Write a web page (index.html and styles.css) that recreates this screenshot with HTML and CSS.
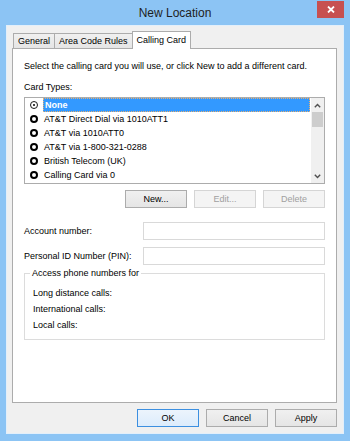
FILE: index.html
```html
<!DOCTYPE html>
<html lang="en">
<head>
    <meta charset="UTF-8">
    <title>New Location</title>
    <link rel="stylesheet" href="styles.css">
</head>
<body>
    <div class="window">
        <div class="titlebar">
            <span class="title">New Location</span>
            <div class="close">
                <svg width="8" height="7" viewBox="0 0 8 7"><path d="M1 0.5 L7 6.5 M7 0.5 L1 6.5" stroke="#fff" stroke-width="1.8"/></svg>
            </div>
        </div>
        <div class="client">
            <div class="tabs">
                <div class="tab">General</div>
                <div class="tab">Area Code Rules</div>
                <div class="tab active">Calling Card</div>
            </div>
            <div class="panel">
                <p class="intro">Select the calling card you will use, or click New to add a different card.</p>
                <p class="caption">Card Types:</p>
                <div class="listbox">
                    <ul class="cards">
                        <li class="selected"><span class="radio checked"></span><span class="name">None</span></li>
                        <li><span class="radio"></span><span class="name">AT&amp;T Direct Dial via 1010ATT1</span></li>
                        <li><span class="radio"></span><span class="name">AT&amp;T via 1010ATT0</span></li>
                        <li><span class="radio"></span><span class="name">AT&amp;T via 1-800-321-0288</span></li>
                        <li><span class="radio"></span><span class="name">British Telecom (UK)</span></li>
                        <li><span class="radio"></span><span class="name">Calling Card via 0</span></li>
                    </ul>
                    <div class="scrollbar">
                        <div class="arrow">
                            <svg width="7" height="5" viewBox="0 0 7 5"><path d="M0.8 4.2 L3.5 1.5 L6.2 4.2" fill="none" stroke="#505050" stroke-width="1.4"/></svg>
                        </div>
                        <div class="thumb"></div>
                        <div class="track"></div>
                        <div class="arrow">
                            <svg width="7" height="5" viewBox="0 0 7 5"><path d="M0.8 0.8 L3.5 3.5 L6.2 0.8" fill="none" stroke="#505050" stroke-width="1.4"/></svg>
                        </div>
                    </div>
                </div>
                <div class="card-buttons">
                    <button class="btn">New...</button>
                    <button class="btn" disabled>Edit...</button>
                    <button class="btn" disabled>Delete</button>
                </div>
                <div class="field">
                    <label>Account number:</label>
                    <div class="textbox"></div>
                </div>
                <div class="field pin">
                    <label>Personal ID Number (PIN):</label>
                    <div class="textbox"></div>
                </div>
                <fieldset class="access">
                    <legend>Access phone numbers for</legend>
                    <p>Long distance calls:</p>
                    <p>International calls:</p>
                    <p>Local calls:</p>
                </fieldset>
            </div>
            <div class="dialog-buttons">
                <button class="btn default">OK</button>
                <button class="btn">Cancel</button>
                <button class="btn">Apply</button>
            </div>
        </div>
    </div>
</body>
</html>
```

FILE: styles.css
```css
body {
    margin: 0;
    padding: 0;
    font-family: "Liberation Sans", Arial, sans-serif;
    font-size: 9px;
    color: #000;
}

.window {
    width: 350px;
    height: 441px;
    background-color: #8cc4f4;
    box-sizing: border-box;
    padding: 0 6px;
}

.titlebar {
    height: 25px;
    position: relative;
    text-align: center;
}

.title {
    display: inline-block;
    font-size: 12px;
    line-height: 14px;
    padding-top: 6px;
    color: #1e1e1e;
}

.close {
    position: absolute;
    top: 1px;
    right: 0;
    width: 27px;
    height: 17px;
    background-color: #c75050;
    display: flex;
    justify-content: center;
    align-items: center;
}

.client {
    height: 409px;
    box-sizing: border-box;
    border: 1px solid #e3effa;
    background-color: #f0f0f0;
}

.tabs {
    display: flex;
    align-items: flex-end;
    height: 17px;
    margin: 5px 0 0 6px;
    position: relative;
    z-index: 1;
}

.tab {
    height: 15px;
    box-sizing: border-box;
    padding: 0 4px;
    line-height: 14px;
    border: 1px solid #acacac;
    border-bottom: none;
    margin-right: -1px;
    background: linear-gradient(#f0f0f0, #e5e5e5);
    color: #000;
}

.tab.active {
    height: 18px;
    margin-bottom: -1px;
    line-height: 16px;
    background: #fff;
}

.panel {
    margin: 0 6px 0 5px;
    height: 355px;
    box-sizing: border-box;
    border: 1px solid #acacac;
    background-color: #fff;
    padding: 0 11px;
}

.panel p {
    margin: 0;
    line-height: 11px;
}

.intro {
    padding-top: 12px;
}

.caption {
    margin-top: 10px !important;
}

.listbox {
    margin-top: 4px;
    height: 87px;
    box-sizing: border-box;
    border: 1px solid #acacac;
    display: flex;
    overflow: hidden;
}

.cards {
    list-style: none;
    margin: 0;
    padding: 0 1px 0 5px;
    flex: 1;
}

.cards li {
    height: 14px;
    display: flex;
    align-items: center;
}

.radio {
    width: 8px;
    height: 8px;
    box-sizing: border-box;
    border: 2px solid #000;
    border-radius: 50%;
    margin-right: 5px;
    display: flex;
    justify-content: center;
    align-items: center;
}

.radio.checked {
    border-width: 1.6px;
    border-color: #1a1a1a;
}

.radio.checked::after {
    content: "";
    width: 2px;
    height: 2px;
    border-radius: 50%;
    background-color: #000;
}

.name {
    flex: 1;
    height: 14px;
    line-height: 14px;
    padding-left: 1px;
    box-sizing: border-box;
    white-space: nowrap;
}

.selected .name {
    background-color: #3399ff;
    color: #fff;
    font-weight: bold;
    border: 1px dotted #e8b070;
    line-height: 12px;
}

.scrollbar {
    width: 13px;
    background-color: #f0f0f0;
    display: flex;
    flex-direction: column;
}

.arrow {
    height: 14px;
    display: flex;
    justify-content: center;
    align-items: center;
}

.thumb {
    height: 15px;
    margin: 0 1px;
    background-color: #cdcdcd;
}

.track {
    flex: 1;
}

.btn {
    width: 62px;
    height: 18px;
    padding: 0;
    border: 1px solid #acacac;
    border-radius: 0;
    background: linear-gradient(#f0f0f0, #e5e5e5);
    font-family: "Liberation Sans", Arial, sans-serif;
    font-size: 9px;
    color: #000;
}

.btn:disabled {
    border-color: #d5d5d5;
    background: #f4f4f4;
    color: #a0a0a0;
}

.btn.default {
    border-color: #3c8fe0;
    background: linear-gradient(#ecf4fc, #dcecfc);
}

.card-buttons {
    display: flex;
    justify-content: flex-end;
    gap: 7px;
    margin-top: 6px;
}

.field {
    display: flex;
    align-items: center;
    justify-content: space-between;
    margin-top: 14px;
}

.field.pin {
    margin-top: 7px;
}

.textbox {
    width: 182px;
    height: 18px;
    box-sizing: border-box;
    border: 1px solid #d9d9d9;
    background-color: #fff;
}

.access {
    margin: 3px 0 0 0;
    padding: 0 8px 6px 8px;
    border: 1px solid #dcdcdc;
}

.access legend {
    padding: 0 2px;
    margin-left: -3px;
    line-height: 11px;
}

.access p {
    line-height: 16px;
}

.access p:first-of-type {
    margin-top: 6px;
}

.dialog-buttons {
    display: flex;
    justify-content: flex-end;
    gap: 7px;
    margin: 6px 6px 0 0;
}
```
